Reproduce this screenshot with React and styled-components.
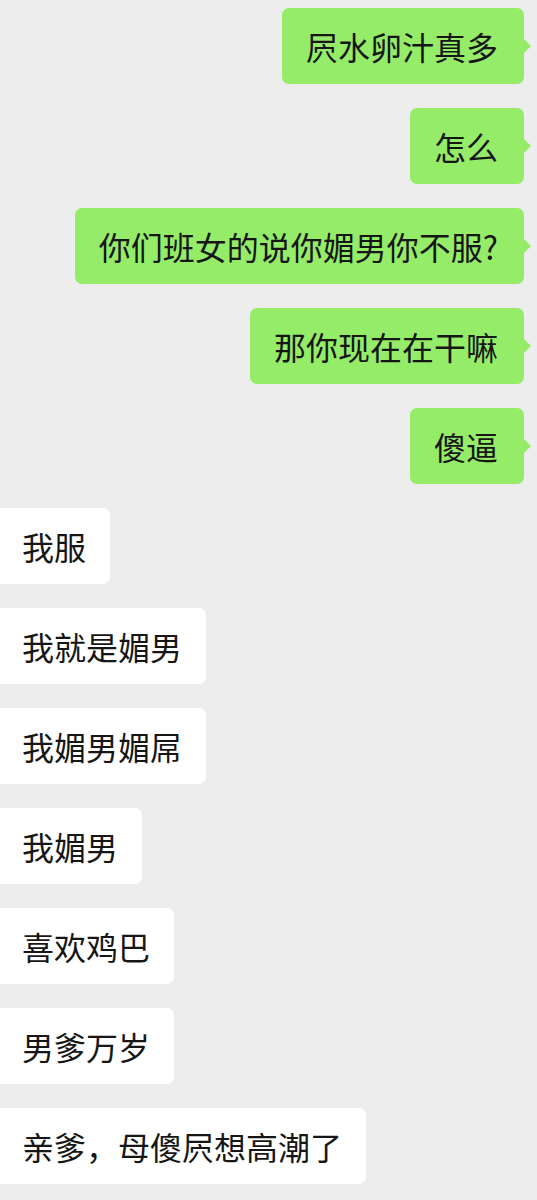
import styled, { createGlobalStyle } from 'styled-components'

const GlobalStyle = createGlobalStyle`
    html, body {
        margin: 0;
        padding: 0;
        background: #EDEDED;
    }
    body {
        font-family: 'Noto Sans CJK SC', 'Noto Sans', sans-serif;
    }
`

const messages = [
    { mine: true, text: '屄水卵汁真多' },
    { mine: true, text: '怎么' },
    { mine: true, text: '你们班女的说你媚男你不服?' },
    { mine: true, text: '那你现在在干嘛' },
    { mine: true, text: '傻逼' },
    { mine: false, text: '我服' },
    { mine: false, text: '我就是媚男' },
    { mine: false, text: '我媚男媚屌' },
    { mine: false, text: '我媚男' },
    { mine: false, text: '喜欢鸡巴' },
    { mine: false, text: '男爹万岁' },
    { mine: false, text: '亲爹，母傻屄想高潮了' },
]

export default function App(){
    return(
        <>
            <GlobalStyle/>
            <Chat>
                {messages.map((m, i) =>
                    <Row key={i} mine={m.mine}>
                        <Bubble mine={m.mine}>{m.text}</Bubble>
                    </Row>
                )}
            </Chat>
        </>
    )
}

const Chat = styled.div`
    display: flex;
    flex-direction: column;
    gap: 24px;
    width: 537px;
    min-height: 1200px;
    box-sizing: border-box;
    padding: 8px 13px 0 0;
    background: #EDEDED;
`
const Row = styled.div`
    display: flex;
    justify-content: ${props => props.mine ? 'flex-end' : 'flex-start'};
`
const Bubble = styled.div`
    position: relative;
    height: 76px;
    line-height: 76px;
    padding: ${props => props.mine ? '0 26px 0 24px' : '0 24px 0 22px'};
    font-size: 32px;
    color: #161616;
    white-space: nowrap;
    background: ${props => props.mine ? '#95EC69' : '#FFFFFF'};
    border-radius: ${props => props.mine ? '7px' : '0 7px 7px 0'};

    &::after {
        content: '';
        display: ${props => props.mine ? 'block' : 'none'};
        position: absolute;
        top: 31px;
        right: -7px;
        border-top: 7px solid transparent;
        border-bottom: 7px solid transparent;
        border-left: 7px solid #95EC69;
    }
`
